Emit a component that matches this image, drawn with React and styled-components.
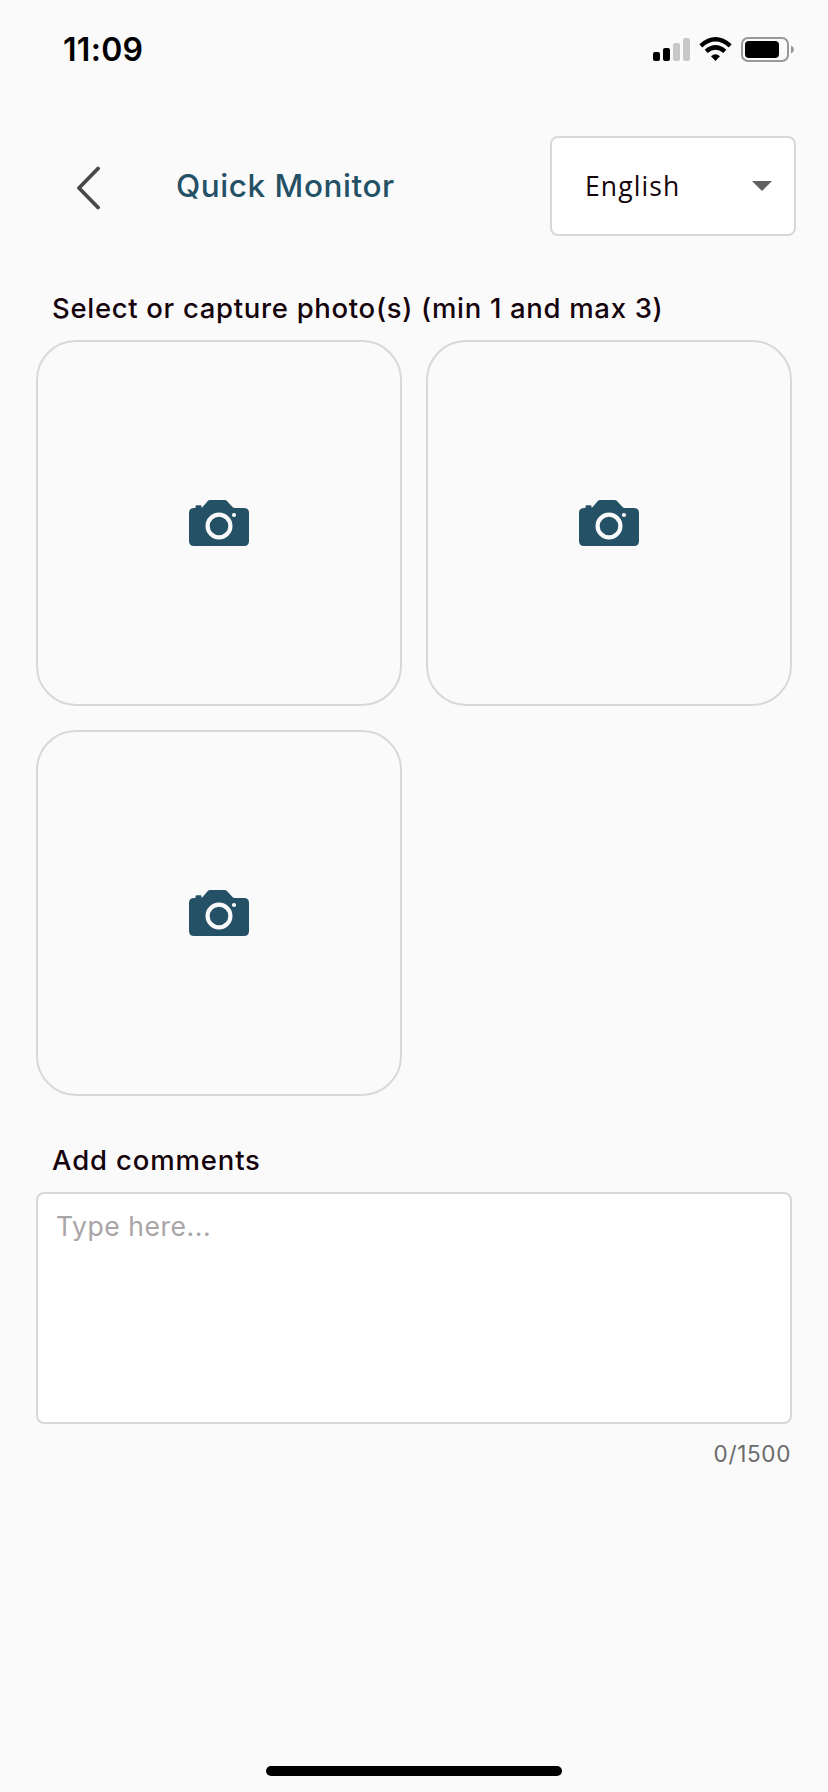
import React from "react";
import styled, { createGlobalStyle } from "styled-components";

const Global = createGlobalStyle`
  * { box-sizing: border-box; }
  body { margin: 0; background: #fafafa; }
`;

const Screen = styled.div`
  width: 828px;
  height: 1792px;
  display: flex;
  flex-direction: column;
  background: #fafafa;
  color: #16040c;
  font-family: Inter, "Liberation Sans", sans-serif;
  overflow: hidden;
`;

const StatusBar = styled.header`
  height: 100px;
  padding: 0 34px 0 63px;
  display: flex;
  justify-content: space-between;
  align-items: center;
  color: #000;
`;

const Text = styled.span`
  display: block;
  white-space: nowrap;
  font-family: ${(p) => p.$family || "inherit"};
  font-size: ${(p) => p.$size}px;
  line-height: ${(p) => p.$line || 32}px;
  font-weight: ${(p) => p.$weight || 400};
  letter-spacing: ${(p) => p.$track || 0}px;
  color: ${(p) => p.$color || "inherit"};
`;

const Title = styled(Text)`
  margin: 0;
`;

const StatusIcons = styled.svg`
  display: block;
  width: 142px;
  height: 26px;
`;

const NavBar = styled.nav`
  height: 136px;
  padding: 36px 32px 0 76px;
  display: flex;
  align-items: center;
`;

const BackButton = styled.button`
  width: 100px;
  height: 48px;
  padding: 4px 0 0;
  border: 0;
  background: none;
  svg { display: block; }
`;

const LanguageSelect = styled.div`
  width: 246px;
  height: 100px;
  margin-left: auto;
  padding: 0 22px 0 33px;
  display: flex;
  align-items: center;
  justify-content: space-between;
  border: 2px solid #d8d8d8;
  border-radius: 8px;
  background: #fff;
`;

const Form = styled.main`
  padding: 56px 36px 0;
  display: flex;
  flex-direction: column;
`;

const Label = styled.div`
  height: 48px;
  padding: 0 0 0 16px;
`;

const PhotoGrid = styled.div`
  display: grid;
  grid-template-columns: 366px 366px;
  grid-auto-rows: 366px;
  gap: 24px;
  margin-bottom: 48px;
`;

const PhotoSlot = styled.div`
  display: flex;
  align-items: center;
  justify-content: center;
  border: 2px solid #d8d8d8;
  border-radius: 40px;
`;

const CommentBox = styled.div`
  height: 232px;
  padding: 16px 18px;
  border: 2px solid #d8d8d8;
  border-radius: 8px;
  background: #fff;
`;

const Counter = styled.div`
  display: flex;
  justify-content: flex-end;
  padding: 14px 1px 0 0;
`;

const HomeBar = styled.div`
  width: 296px;
  height: 10px;
  margin: auto auto 16px;
  border-radius: 5px;
  background: #000;
`;

const Camera = () => (
  <svg width="60" height="46" viewBox="0 0 60 46">
    <path
      fill="#255166"
      d="M5 8H6.5V6.5Q6.5 5.3 7.7 5.3H11.3Q12.5 5.3 12.5 6.5V7.5H13.2L18.8 1Q19.6 0 21 0H35.5Q37 0 38 1L43.5 7Q44.5 8 46 8H55Q60 8 60 13V41Q60 46 55 46H5Q0 46 0 41V13Q0 8 5 8Z"
    />
    <circle cx="30" cy="26" r="11.4" fill="none" stroke="#fafafa" strokeWidth="4.2" />
    <circle cx="45" cy="15" r="2.1" fill="#fafafa" />
  </svg>
);

const StatusGlyphs = () => (
  <StatusIcons viewBox="0 0 142 26">
    <rect x="1" y="15" width="7" height="9" rx="2" />
    <rect x="11" y="11" width="7" height="13" rx="2" />
    <rect x="21" y="6" width="7" height="18" rx="2" fill="#c8c8c8" />
    <rect x="31" y="1" width="7" height="23" rx="2" fill="#c8c8c8" />
    <path d="M48.8 8.8Q63.5-4.2 78.2 8.8M54.2 14.4Q63.5 6.4 72.8 14.4" fill="none" stroke="#000" strokeWidth="4.4" />
    <path d="M59 19.2Q63.5 15.5 68 19.2L63.5 24Z" />
    <rect x="90" y="1" width="46" height="23" rx="6" fill="none" stroke="#999" strokeWidth="2" />
    <rect x="93" y="4" width="34" height="17" rx="4" />
    <path d="M139 8.5Q142 10 142 12.5Q142 15 139 16.5Z" fill="#999" />
  </StatusIcons>
);

export default function App() {
  return (
    <>
      <Global />
      <Screen>
        <StatusBar>
          <Text $size={32} $weight={600} $track={0.3}>11:09</Text>
          <StatusGlyphs />
        </StatusBar>
        <NavBar>
          <BackButton aria-label="Back">
            <svg width="24" height="44" viewBox="0 0 24 44">
              <path d="M22 2.5L3 22L22 41.5" fill="none" stroke="#484848" strokeWidth="3.8" strokeLinecap="round" strokeLinejoin="round" />
            </svg>
          </BackButton>
          <Title as="h1" $size={31.5} $weight={500} $track={0.55} $color="#255166">Quick Monitor</Title>
          <LanguageSelect>
            <Text $size={26.5} $track={1.1} $family='"Open Sans", sans-serif'>English</Text>
            <svg width="20" height="10" viewBox="0 0 20 10">
              <path d="M0 0H20L10 10Z" fill="#616161" />
            </svg>
          </LanguageSelect>
        </NavBar>
        <Form>
          <Label><Text $size={27.5} $weight={500} $track={0.68}>Select or capture photo(s) (min 1 and max 3)</Text></Label>
          <PhotoGrid>
            {[0, 1, 2].map((slot) => (
              <PhotoSlot key={slot}><Camera /></PhotoSlot>
            ))}
          </PhotoGrid>
          <Label><Text $size={27.5} $weight={500} $track={0.85}>Add comments</Text></Label>
          <CommentBox><Text $size={26.5} $track={0.55} $color="#a9a4a6">Type here...</Text></CommentBox>
          <Counter><Text $size={22.5} $track={0.65} $color="#6b6b6b">0/1500</Text></Counter>
        </Form>
        <HomeBar />
      </Screen>
    </>
  );
}
